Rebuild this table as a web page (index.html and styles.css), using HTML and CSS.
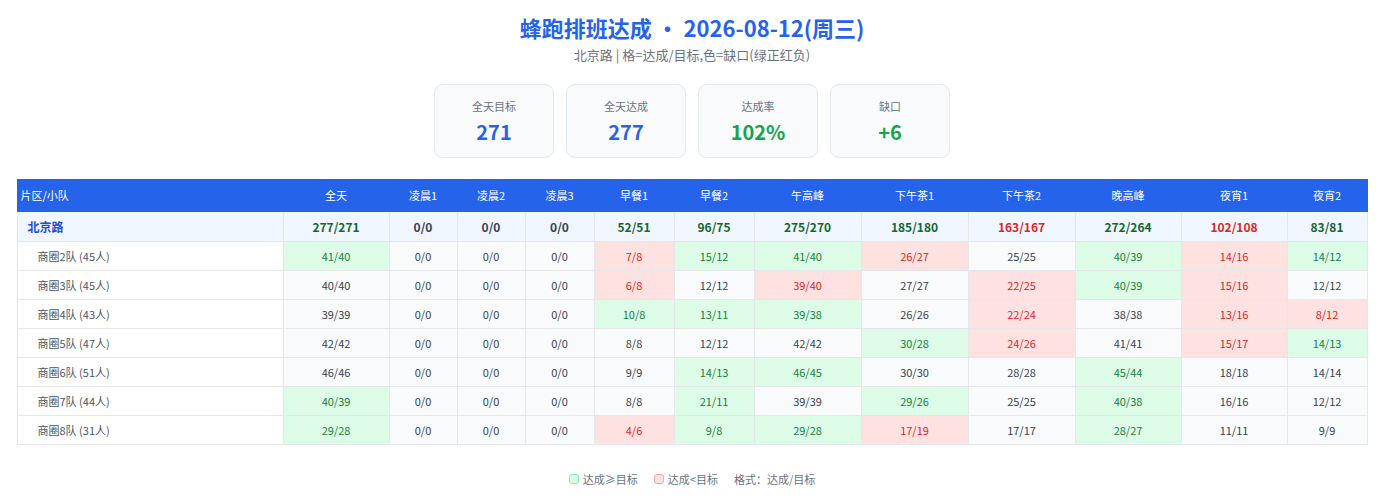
FILE: index.html
```html
<!DOCTYPE html>
<html lang="zh-CN">
<head>
<meta charset="utf-8">
<title>蜂跑排班达成</title>
<link rel="stylesheet" href="styles.css">
</head>
<body>
<div class="page">
  <h1 class="title">蜂跑排班达成 · 2026-08-12(周三)</h1>
  <div class="subtitle">北京路 | 格=达成/目标,色=缺口(绿正红负)</div>
  <div class="cards">
    <div class="card"><div class="card-label">全天目标</div><div class="card-value blue">271</div></div>
    <div class="card"><div class="card-label">全天达成</div><div class="card-value blue">277</div></div>
    <div class="card"><div class="card-label">达成率</div><div class="card-value green">102%</div></div>
    <div class="card"><div class="card-label">缺口</div><div class="card-value green">+6</div></div>
  </div>
  <table class="grid">
    <colgroup>
      <col class="c-name"><col class="c106"><col class="c68"><col class="c68"><col class="c69"><col class="c80"><col class="c80"><col class="c107"><col class="c107"><col class="c107"><col class="c106"><col class="c106"><col class="c80">
    </colgroup>
    <thead>
      <tr><th class="th-name">片区/小队</th><th>全天</th><th>凌晨1</th><th>凌晨2</th><th>凌晨3</th><th>早餐1</th><th>早餐2</th><th>午高峰</th><th>下午茶1</th><th>下午茶2</th><th>晚高峰</th><th>夜宵1</th><th>夜宵2</th></tr>
    </thead>
    <tbody>
      <tr class="total"><td class="name">北京路</td><td class="g">277/271</td><td class="n">0/0</td><td class="n">0/0</td><td class="n">0/0</td><td class="g">52/51</td><td class="g">96/75</td><td class="g">275/270</td><td class="g">185/180</td><td class="r">163/167</td><td class="g">272/264</td><td class="r">102/108</td><td class="g">83/81</td></tr>
      <tr><td class="name">商圈2队 (45人)</td><td class="g">41/40</td><td class="n">0/0</td><td class="n">0/0</td><td class="n">0/0</td><td class="r">7/8</td><td class="g">15/12</td><td class="g">41/40</td><td class="r">26/27</td><td class="n">25/25</td><td class="g">40/39</td><td class="r">14/16</td><td class="g">14/12</td></tr>
      <tr><td class="name">商圈3队 (45人)</td><td class="n">40/40</td><td class="n">0/0</td><td class="n">0/0</td><td class="n">0/0</td><td class="r">6/8</td><td class="n">12/12</td><td class="r">39/40</td><td class="n">27/27</td><td class="r">22/25</td><td class="g">40/39</td><td class="r">15/16</td><td class="n">12/12</td></tr>
      <tr><td class="name">商圈4队 (43人)</td><td class="n">39/39</td><td class="n">0/0</td><td class="n">0/0</td><td class="n">0/0</td><td class="g">10/8</td><td class="g">13/11</td><td class="g">39/38</td><td class="n">26/26</td><td class="r">22/24</td><td class="n">38/38</td><td class="r">13/16</td><td class="r">8/12</td></tr>
      <tr><td class="name">商圈5队 (47人)</td><td class="n">42/42</td><td class="n">0/0</td><td class="n">0/0</td><td class="n">0/0</td><td class="n">8/8</td><td class="n">12/12</td><td class="n">42/42</td><td class="g">30/28</td><td class="r">24/26</td><td class="n">41/41</td><td class="r">15/17</td><td class="g">14/13</td></tr>
      <tr><td class="name">商圈6队 (51人)</td><td class="n">46/46</td><td class="n">0/0</td><td class="n">0/0</td><td class="n">0/0</td><td class="n">9/9</td><td class="g">14/13</td><td class="g">46/45</td><td class="n">30/30</td><td class="n">28/28</td><td class="g">45/44</td><td class="n">18/18</td><td class="n">14/14</td></tr>
      <tr><td class="name">商圈7队 (44人)</td><td class="g">40/39</td><td class="n">0/0</td><td class="n">0/0</td><td class="n">0/0</td><td class="n">8/8</td><td class="g">21/11</td><td class="n">39/39</td><td class="g">29/26</td><td class="n">25/25</td><td class="g">40/38</td><td class="n">16/16</td><td class="n">12/12</td></tr>
      <tr><td class="name">商圈8队 (31人)</td><td class="g">29/28</td><td class="n">0/0</td><td class="n">0/0</td><td class="n">0/0</td><td class="r">4/6</td><td class="g">9/8</td><td class="g">29/28</td><td class="r">17/19</td><td class="n">17/17</td><td class="g">28/27</td><td class="n">11/11</td><td class="n">9/9</td></tr>
    </tbody>
  </table>
  <div class="legend">
    <span class="legend-item"><span class="sw sw-g"></span>达成≥目标</span>
    <span class="legend-item"><span class="sw sw-r"></span>达成&lt;目标</span>
    <span class="legend-item">格式：达成/目标</span>
  </div>
</div>
</body>
</html>
```

FILE: styles.css
```css
* { box-sizing: border-box; }
html, body { margin: 0; padding: 0; background: #ffffff; }
body {
  font-family: "Noto Sans CJK SC", "Noto Sans", sans-serif;
  color: #374151;
}
.page {
  padding: 12px 17px 0;
  display: flex;
  flex-direction: column;
  align-items: center;
}
.title {
  margin: 0;
  font-size: 22px;
  line-height: 30px;
  font-weight: 700;
  color: #2563eb;
  text-align: center;
}
.subtitle {
  margin-top: 4px;
  font-size: 13px;
  line-height: 18px;
  color: #6b7280;
  text-align: center;
}
.cards {
  margin-top: 20px;
  display: flex;
  gap: 12px;
}
.card {
  width: 120px;
  height: 74px;
  border: 1px solid #e2e8f0;
  border-radius: 9px;
  background: #f8fafc;
  display: flex;
  flex-direction: column;
  align-items: center;
  padding-top: 12px;
}
.card-label {
  font-size: 11px;
  line-height: 18px;
  color: #6b7280;
}
.card-value {
  margin-top: 4px;
  font-size: 20px;
  line-height: 26px;
  font-weight: 700;
}
.blue { color: #2563eb; }
.green { color: #16a34a; }

.grid {
  margin-top: 21px;
  width: 1350px;
  border-collapse: collapse;
  table-layout: fixed;
  font-size: 11px;
}
.c-name { width: 266px; }
.c106 { width: 106px; }
.c107 { width: 107px; }
.c68 { width: 68px; }
.c69 { width: 69px; }
.c80 { width: 80px; }
.grid th {
  background: #2563eb;
  color: #ffffff;
  font-weight: 400;
  font-size: 11px;
  line-height: 18px;
  padding: 6px 4px 7px;
  text-align: center;
  border: 1px solid #2563eb;
}
.grid th.th-name { text-align: left; padding-left: 3px; }
.grid td {
  border: 1px solid #e5e7eb;
  text-align: center;
  font-size: 11px;
  line-height: 18px;
  padding: 5px 4px;
  background: #f9fafb;
  color: #374151;
  white-space: nowrap;
}
.grid td.name {
  text-align: left;
  padding-left: 20px;
  background: #ffffff;
  color: #4b5563;
}
.grid td.g { background: #dcfce7; color: #15803d; }
.grid td.r { background: #fee2e2; color: #dc2626; }
.grid tr.total td {
  background: #eff6ff;
  font-weight: 700;
  font-size: 12px;
  line-height: 19px;
}
.grid tr.total td.name { color: #1d4ed8; padding-left: 10px; }
.grid tr.total td.g { color: #166534; }
.grid tr.total td.r { color: #dc2626; }
.grid tr.total td.n { color: #374151; }

.legend {
  margin-top: 25px;
  display: flex;
  gap: 16px;
  font-size: 11px;
  line-height: 18px;
  color: #6b7280;
}
.legend-item {
  display: flex;
  align-items: center;
  gap: 4px;
}
.sw {
  width: 10px;
  height: 10px;
  border-radius: 3px;
  display: inline-block;
}
.sw-g { background: #dcfce7; border: 1px solid #86efac; }
.sw-r { background: #fee2e2; border: 1px solid #fca5a5; }
```
